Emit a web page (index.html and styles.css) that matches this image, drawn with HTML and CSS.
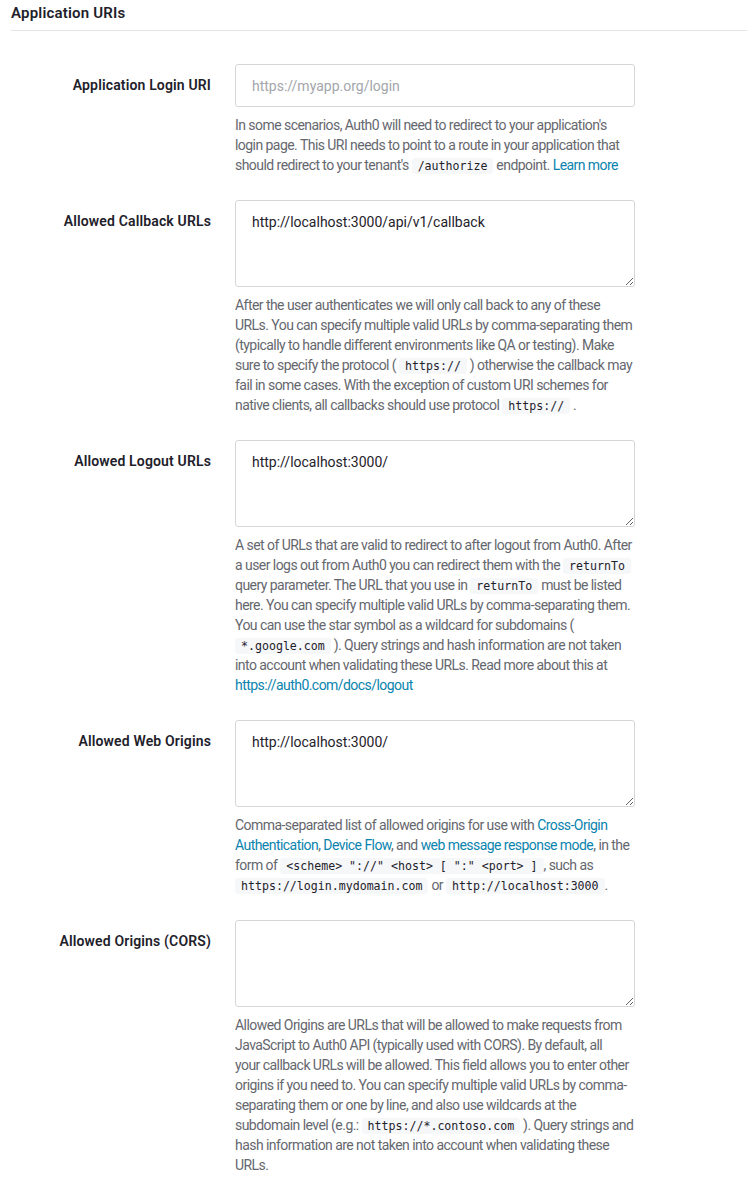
FILE: index.html
```html
<!DOCTYPE html>
<html>
<head>
<meta charset="utf-8">
<link rel="stylesheet" href="styles.css">
</head>
<body>
<section class="panel">
  <h2 class="panel-title">Application URIs</h2>
  <div class="form">
    <div class="row">
      <label class="label">Application Login URI</label>
      <div class="field">
        <input class="input" type="text" placeholder="https://myapp.org/login">
        <p class="help">In some scenarios, Auth0 will need to redirect to your application's login page. This URI needs to point to a route in your application that should redirect to your tenant's <code>/authorize</code> endpoint. <a href="#">Learn more</a></p>
      </div>
    </div>
    <div class="row">
      <label class="label">Allowed Callback URLs</label>
      <div class="field">
        <textarea class="textarea">http://localhost:3000/api/v1/callback</textarea>
        <p class="help">After the user authenticates we will only call back to any of these URLs. You can specify multiple valid URLs by comma-separating them (typically to handle different environments like QA or testing). Make sure to specify the protocol ( <code>https://</code> ) otherwise the callback may fail in some cases. With the exception of custom URI schemes for native clients, all callbacks should use protocol <code>https://</code> .</p>
      </div>
    </div>
    <div class="row">
      <label class="label">Allowed Logout URLs</label>
      <div class="field">
        <textarea class="textarea">http://localhost:3000/</textarea>
        <p class="help">A set of URLs that are valid to redirect to after logout from Auth0. After a user logs out from Auth0 you can redirect them with the <code>returnTo</code> query parameter. The URL that you use in <code>returnTo</code> must be listed here. You can specify multiple valid URLs by comma-separating them. You can use the star symbol as a wildcard for subdomains ( <code>*.google.com</code> ). Query strings and hash information are not taken into account when validating these URLs. Read more about this at <a href="#">https://auth0.com/docs/logout</a></p>
      </div>
    </div>
    <div class="row">
      <label class="label">Allowed Web Origins</label>
      <div class="field">
        <textarea class="textarea">http://localhost:3000/</textarea>
        <p class="help">Comma-separated list of allowed origins for use with <a href="#">Cross-Origin Authentication</a>, <a href="#">Device Flow</a>, and <a href="#">web message response mode</a>, in the form of <code>&lt;scheme&gt; "://" &lt;host&gt; [ ":" &lt;port&gt; ]</code>, such as <code>https://login.mydomain.com</code> or <code>http://localhost:3000</code>.</p>
      </div>
    </div>
    <div class="row">
      <label class="label">Allowed Origins (CORS)</label>
      <div class="field">
        <textarea class="textarea"></textarea>
        <p class="help">Allowed Origins are URLs that will be allowed to make requests from JavaScript to Auth0 API (typically used with CORS). By default, all<br>your callback URLs will be allowed. This field allows you to enter other origins if you need to. You can specify multiple valid URLs by comma-separating them or one by line, and also use wildcards at the subdomain level (e.g.: <code>https://*.contoso.com</code> ). Query strings and hash information are not taken into account when validating these URLs.</p>
      </div>
    </div>
  </div>
</section>
</body>
</html>
```

FILE: styles.css
```css
html, body {
  margin: 0;
  padding: 0;
  background: #ffffff;
}
body {
  font-family: Roboto, "Noto Sans", sans-serif;
  color: #1e212a;
  font-size: 14px;
}
.panel {
  padding: 0 0 0 11px;
}
.panel-title {
  margin: 0;
  padding: 3px 0 0 0;
  height: 27px;
  line-height: 20px;
  font-size: 15px;
  font-weight: 600;
  letter-spacing: 0.2px;
  color: #1e212a;
  border-bottom: 1px solid #e3e5e7;
}
.form {
  padding-top: 33px;
  display: flex;
  flex-direction: column;
  gap: 25px;
}
.row {
  display: flex;
  gap: 24px;
}
.label {
  width: 200px;
  text-align: right;
  font-weight: 600;
  font-size: 14px;
  line-height: 20px;
  padding-top: 11px;
  letter-spacing: 0.15px;
  color: #1e212a;
}
.field {
  width: 400px;
  display: flex;
  flex-direction: column;
  gap: 8px;
}
.input, .textarea {
  box-sizing: border-box;
  width: 400px;
  margin: 0;
  border: 1px solid #d4d7d9;
  border-radius: 3px;
  font-family: Roboto, "Noto Sans", sans-serif;
  font-size: 14px;
  color: #1e212a;
  background: #fff;
  padding: 0 16px;
  outline: none;
}
.input {
  height: 43px;
}
.input::placeholder {
  color: #a3a6ab;
}
.textarea {
  height: 87px;
  padding-top: 11px;
  line-height: 20px;
  resize: vertical;
  display: block;
}
.help {
  margin: 0;
  font-size: 14px;
  line-height: 20px;
  letter-spacing: -0.55px;
  color: #65676e;
}
.help a {
  color: #0a84ae;
  text-decoration: none;
}
code {
  font-family: "DejaVu Sans Mono", "Liberation Mono", monospace;
  font-size: 11.6px;
  line-height: 16px;
  letter-spacing: 0;
  color: #1e212a;
  background: #f5f7f9;
  border-radius: 3px;
  padding: 1px 6px;
}
```
